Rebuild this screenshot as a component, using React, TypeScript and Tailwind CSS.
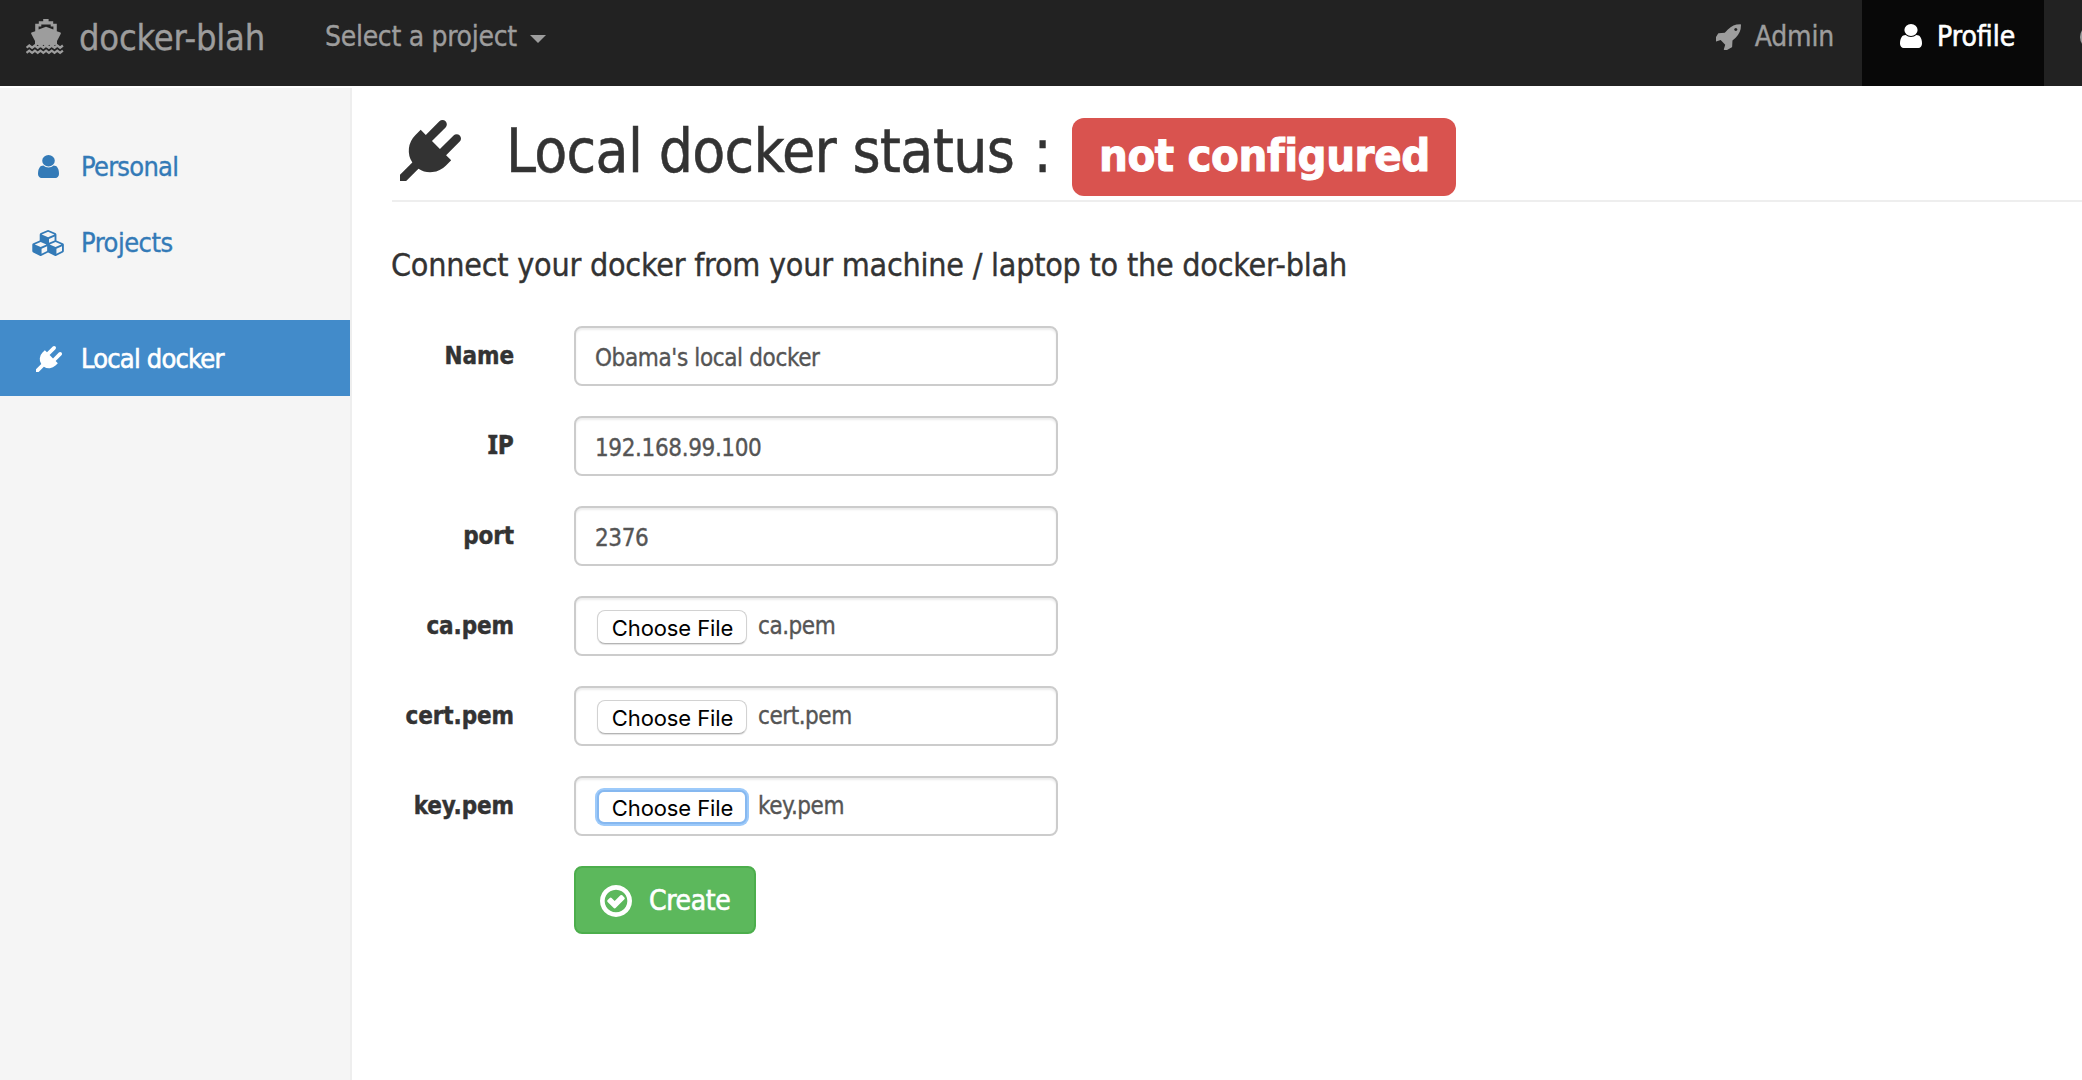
import type { ReactNode } from "react";

type IconProps = { className: string };

function UserIcon({ className }: IconProps) {
  return (
    <svg viewBox="256 128 1280 1536" preserveAspectRatio="none" fill="currentColor" className={className}>
      <path d="M1536 1399q0 109-62.5 187t-150.5 78h-854q-88 0-150.5-78t-62.5-187q0-85 8.5-160.5t31.5-152 58.5-131 94-89 134.5-34.5q131 128 313 128t313-128q76 0 134.5 34.5t94 89 58.5 131 31.5 152 8.5 160.5zm-256-887q0 159-112.5 271.5t-271.5 112.5-271.5-112.5-112.5-271.5 112.5-271.5 271.5-112.5 271.5 112.5 112.5 271.5z" />
    </svg>
  );
}

function PlugIcon({ className }: IconProps) {
  return (
    <svg viewBox="0 0 1792 1792" fill="currentColor" className={className}>
      <path d="M1755 453q37 38 37 90.5t-37 90.5l-401 400 150 150-160 160q-163 163-389.5 186.5t-411.5-100.5l-362 362h-181v-181l362-362q-124-185-100.5-411.5t186.5-389.5l160-160 150 150 400-401q38-37 91-37t90 37 37 90.5-37 90.5l-400 401 234 234 401-400q38-37 91-37t90 37z" />
    </svg>
  );
}

function CubesIcon({ className }: IconProps) {
  return (
    <svg viewBox="0 0 2304 1792" fill="currentColor" className={className}>
      <path d="M640 1632l384-192v-314l-384 164v342zm-64-454l404-173-404-173-404 173zm1088 454l384-192v-314l-384 164v342zm-64-454l404-173-404-173-404 173zm-448-293l384-165v-266l-384 164v267zm-64-379l441-189-441-189-441 189zm1088 518v416q0 36-19 67t-52 47l-448 224q-25 14-57 14t-57-14l-448-224q-5-2-7-4-2 2-7 4l-448 224q-25 14-57 14t-57-14l-448-224q-33-16-52-47t-19-67v-416q0-38 21.5-70t56.5-48l434-186v-400q0-38 21.5-70t56.5-48l448-192q23-10 50-10t50 10l448 192q35 16 56.5 48t21.5 70v400l434 186q36 16 57 48t21 70z" />
    </svg>
  );
}

function RocketIcon({ className }: IconProps) {
  return (
    <svg viewBox="128 128 1536 1560" fill="currentColor" className={className}>
      <path d="M1440 448q0-40-28-68t-68-28-68 28-28 68 28 68 68 28 68-28 28-68zm224-288q0 249-75.5 430.5t-253.5 360.5q-81 80-195 176l-20 379q-2 16-16 26l-384 224q-7 4-16 4-12 0-23-9l-64-64q-13-14-8-32l85-276-281-281-276 85q-3 1-9 1-14 0-23-9l-64-64q-17-19-5-39l224-384q10-14 26-16l379-20q96-114 176-195 188-187 358-258t431-71q14 0 24 9.5t10 22.5z" />
    </svg>
  );
}

function CheckCircleIcon({ className }: IconProps) {
  return (
    <svg viewBox="128 128 1536 1536" fill="currentColor" className={className}>
      <path d="M1299 813l-422 422q-19 19-45 19t-45-19l-294-294q-19-19-19-45t19-45l102-102q19-19 45-19t45 19l147 147 275-275q19-19 45-19t45 19l102 102q19 19 19 45t-19 45zm141 83q0-148-73-273t-198-198-273-73-273 73-198 198-73 273 73 273 198 198 273 73 273-73 198-198 73-273zm224 0q0 209-103 385.5t-279.5 279.5-385.5 103-385.5-103-279.5-279.5-103-385.5 103-385.5 279.5-279.5 385.5-103 385.5 103 279.5 279.5 103 385.5z" />
    </svg>
  );
}

function ShipIcon({ className }: IconProps) {
  return (
    <svg viewBox="0 0 40 36" fill="currentColor" className={className}>
      <path d="M17.2 0h5.4v2.2h4.6v2.6h3.6v7.4l3.7 1.4q.6.4.3 1.1L31 22v5.4l-1.8-1.6-2.9 2.6-2.9-2.6-2.9 2.6-2.9-2.6-2.9 2.6-2.9-2.6L9 27.4V22l-3.800-7.300q-.3-.7.3-1.100L9.200 12.200V4.800h3.600V2.200h4.400zM12.600 7.600v2.800L20 7.800l7.400 2.600V7.600h-2.700V5.400h-9.400v2.200z" />
      <path
        d="M.5 28.700l2.800-2.200 2.800 2.200 2.800-2.200 2.800 2.200 2.800-2.200 2.800 2.200 2.800-2.200 2.800 2.200 2.800-2.200 2.800 2.200 2.800-2.200 2.800 2.200 2.800-2.200M.5 33.900l2.800-2.200 2.800 2.200 2.800-2.200 2.800 2.200 2.800-2.200 2.800 2.200 2.800-2.200 2.800 2.200 2.800-2.200 2.800 2.200 2.800-2.200 2.800 2.200 2.800-2.200"
        fill="none"
        stroke="currentColor"
        strokeWidth="2.3"
      />
    </svg>
  );
}

function FormRow({ label, serif, children }: { label: string; serif?: boolean; children: ReactNode }) {
  return (
    <div className="flex h-[60px] items-center">
      <label
        className={
          serif
            ? "mb-[4px] w-[122px] text-right font-['Noto_Sans'] text-[26px] leading-[56px] font-bold [-webkit-text-stroke:0.6px]"
            : "w-[122px] text-right text-[24px] leading-[60px] font-bold tracking-[-0.1px] [-webkit-text-stroke:0.4px]"
        }
      >
        {label}
      </label>
      <div className="ml-[60px] flex h-[60px] w-[484px] items-center rounded-[8px] border-2 border-[#ccc] bg-white pl-[19px] text-[24px] tracking-[-0.37px] text-[#555] shadow-[inset_0_2px_2px_rgba(0,0,0,0.075)]">
        {children}
      </div>
    </div>
  );
}

function FileField({ name, focused }: { name: string; focused?: boolean }) {
  return (
    <>
      <button
        className={
          focused
            ? "mt-[2px] ml-[2px] h-[34px] w-[150px] rounded-[7px] border-2 border-[#86b8f0] bg-white pt-px pl-px font-[Inter] text-[22px] leading-[30px] tracking-[-0.1px] text-black shadow-[0_0_0_2px_#9dcafa] [-webkit-text-stroke:0px]"
            : "mt-[2px] ml-[2px] h-[34px] w-[150px] rounded-[8px] border border-[#d2d2d2] border-b-[#b4b4b4] bg-white pt-px pl-px font-[Inter] text-[22px] leading-[32px] tracking-[-0.1px] text-black shadow-[0_1px_1px_rgba(0,0,0,0.12)] [-webkit-text-stroke:0px]"
        }
      >
        Choose File
      </button>
      <span className="mb-[1px] ml-[11px] leading-[40px] tracking-[-0.45px]">{name}</span>
    </>
  );
}

export default function App() {
  return (
    <div className="flex h-[1080px] w-full flex-col overflow-hidden bg-white font-['DejaVu_Sans_Condensed','DejaVu_Sans',sans-serif] text-[#333] [-webkit-text-stroke:0.35px]">
      <nav className="flex h-[86px] shrink-0 bg-[#222] text-[#9d9d9d]">
        <a className="flex h-[76px] items-center pl-[26px]">
          <ShipIcon className="mb-[2px] h-[36px] w-[40px]" />
          <span className="ml-[13px] text-[36px] leading-[74px] tracking-[-0.2px]">docker-blah</span>
        </a>
        <a className="ml-[60px] flex h-[74px] items-center text-[28px] tracking-[-0.3px]">
          Select a project
          <span className="mt-[3px] ml-[13px] border-x-8 border-t-8 border-x-transparent border-t-[#9d9d9d]" />
        </a>
        <div className="ml-auto flex text-[28px]">
          <a className="flex h-[74px] items-center pr-[28px]">
            <RocketIcon className="h-[26px] w-[25px]" />
            <span className="ml-[14px] tracking-[-0.2px]">Admin</span>
          </a>
          <a className="flex h-[86px] w-[182px] bg-[#080808] text-white">
            <span className="flex h-[74px] items-center pl-[38px] [-webkit-text-stroke:0.6px]">
              <UserIcon className="mb-[2px] h-[24px] w-[22px]" />
              <span className="ml-[15px]">Profile</span>
            </span>
          </a>
          <span className="flex h-[74px] w-[38px] items-center overflow-hidden">
            <span className="ml-[36px] size-[24px] shrink-0 rounded-full bg-[#9d9d9d]" />
          </span>
        </div>
      </nav>

      <div className="mt-[2px] flex min-h-0 flex-1">
        <aside className="flex w-[352px] shrink-0 flex-col border-r-2 border-[#eee] bg-[#f5f5f5] pt-[40px] text-[27px] leading-[74px] tracking-[-0.75px] text-[#337ab7]">
          <a className="flex h-[76px] items-center">
            <span className="flex w-[81px] pl-[38px]">
              <UserIcon className="h-[23px] w-[21px]" />
            </span>
            <span className="mt-[2px]">Personal</span>
          </a>
          <a className="flex h-[76px] items-center">
            <span className="flex w-[81px] pl-[32px]">
              <CubesIcon className="mt-px h-[26px] w-[34px]" />
            </span>
            <span className="mt-[2px] tracking-[-0.5px]">Projects</span>
          </a>
          <a className="mt-[40px] flex h-[76px] items-center bg-[#428bca] text-white [-webkit-text-stroke:0.6px]">
            <span className="flex w-[81px] pl-[36px]">
              <PlugIcon className="mt-px size-[26px]" />
            </span>
            <span className="mt-[2px] tracking-[-0.8px]">Local docker</span>
          </a>
        </aside>

        <main className="flex min-w-0 flex-1 flex-col pl-[39px]">
          <h1 className="ml-px flex h-[114px] items-start border-b-2 border-[#eee] text-[60px] leading-[66px] [-webkit-text-stroke:0.5px]">
            <PlugIcon className="mt-[32px] ml-[8px] size-[61px] shrink-0" />
            <span className="mt-[30px] ml-[45px] w-[542px] shrink-0 tracking-[-0.7px] whitespace-nowrap">
              Local docker status <span className="ml-[3px]">:</span>
            </span>
            <span className="mt-[30px] ml-[24px] h-[78px] w-[384px] shrink-0 rounded-[12px] bg-[#d9534f] pl-[27px] text-[45px] leading-[76px] font-bold tracking-[-0.4px] whitespace-nowrap text-white [-webkit-text-stroke:1px]">
              not configured
            </span>
          </h1>
          <p className="mt-[41px] text-[32px] leading-[44px] tracking-[-0.24px]">
            Connect your docker from your machine / laptop to the docker-blah
          </p>
          <form className="mt-[39px] ml-px flex flex-col gap-[30px]">
            <FormRow label="Name">
              <span className="mt-[3px]">Obama's local docker</span>
            </FormRow>
            <FormRow label="IP" serif>
              <span className="mt-[3px]">192.168.99.100</span>
            </FormRow>
            <FormRow label="port">
              <span className="mt-[3px]">2376</span>
            </FormRow>
            <FormRow label="ca.pem">
              <FileField name="ca.pem" />
            </FormRow>
            <FormRow label="cert.pem">
              <FileField name="cert.pem" />
            </FormRow>
            <FormRow label="key.pem">
              <FileField name="key.pem" focused />
            </FormRow>
            <button className="ml-[182px] flex h-[68px] w-[182px] items-center rounded-[8px] border-2 border-[#4cae4c] bg-[#5cb85c] pl-[24px] text-[28px] tracking-[-0.4px] text-white [-webkit-text-stroke:0.6px]">
              <CheckCircleIcon className="mt-px size-[32px]" />
              <span className="mt-px ml-[17px]">Create</span>
            </button>
          </form>
        </main>
      </div>
    </div>
  );
}
